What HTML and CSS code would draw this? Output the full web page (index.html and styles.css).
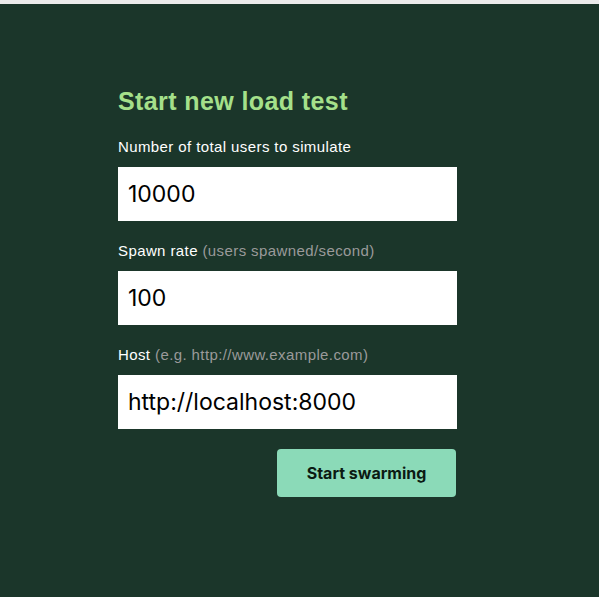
FILE: index.html
```html
<!DOCTYPE html>
<html lang="en">
<head>
<meta charset="utf-8">
<title>Start new load test</title>
<link rel="stylesheet" href="styles.css">
</head>
<body>
<div class="topbar"></div>
<main class="page">
  <form class="swarm-form">
    <h2 class="title">Start new load test</h2>
    <div class="field">
      <label class="label" for="users">Number of total users to simulate</label>
      <input class="input" id="users" type="text" value="10000">
    </div>
    <div class="field">
      <label class="label" for="rate">Spawn rate <span class="hint">(users spawned/second)</span></label>
      <input class="input" id="rate" type="text" value="100">
    </div>
    <div class="field">
      <label class="label" for="host">Host <span class="hint">(e.g. http://www.example.com)</span></label>
      <input class="input" id="host" type="text" value="http://localhost:8000">
    </div>
    <div class="actions">
      <button class="btn" type="button">Start swarming</button>
    </div>
  </form>
</main>
</body>
</html>
```
FILE: styles.css
```css
html, body {
  margin: 0;
  padding: 0;
  height: 100%;
}
body {
  background: #1b362a;
  display: flex;
  flex-direction: column;
}
.topbar {
  height: 4px;
  background: #ebebeb;
  flex: none;
}
.page {
  flex: 1;
  padding: 83px 0 0 118px;
}
.swarm-form {
  width: 339px;
  display: flex;
  flex-direction: column;
  gap: 21px;
}
.title {
  margin: 0 0 2px 0;
  font-family: "Liberation Sans", Arial, sans-serif;
  font-size: 25px;
  line-height: 28px;
  font-weight: 700;
  letter-spacing: 0.4px;
  color: #a5e08a;
}
.field {
  display: flex;
  flex-direction: column;
  gap: 11px;
}
.label {
  font-family: "Liberation Sans", Arial, sans-serif;
  font-size: 15px;
  line-height: 18px;
  letter-spacing: 0.4px;
  color: #ffffff;
}
.hint {
  color: #9a9a9a;
}
.input {
  height: 54px;
  box-sizing: border-box;
  border: none;
  outline: none;
  margin: 0;
  padding: 0 10px;
  background: #ffffff;
  color: #000000;
  font-family: Inter, "Noto Sans", sans-serif;
  font-size: 23px;
}
.actions {
  display: flex;
  justify-content: flex-end;
  padding-right: 1px;
  margin-top: -1px;
}
.btn {
  width: 179px;
  height: 48px;
  border: none;
  border-radius: 4px;
  background: #8bdab8;
  color: #0b1a13;
  font-family: Inter, "Noto Sans", sans-serif;
  font-size: 16px;
  font-weight: 700;
  cursor: pointer;
}
```
